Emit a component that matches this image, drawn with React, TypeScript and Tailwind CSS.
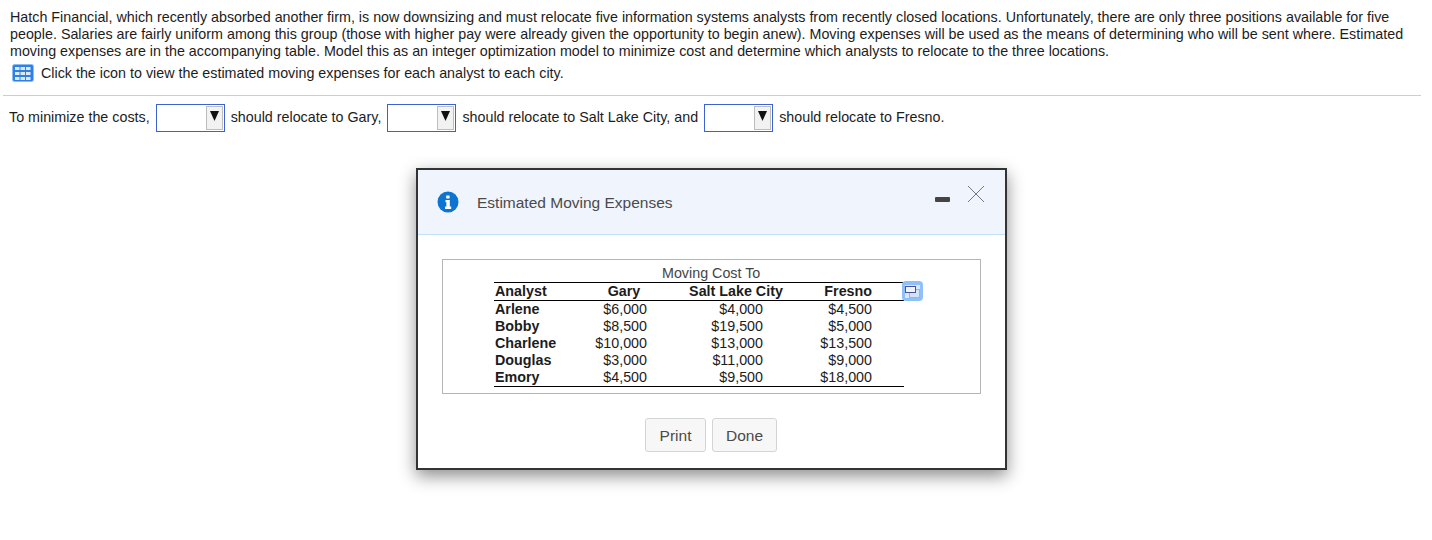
const ROWS = [
  ["Arlene", "$6,000", "$4,000", "$4,500"],
  ["Bobby", "$8,500", "$19,500", "$5,000"],
  ["Charlene", "$10,000", "$13,000", "$13,500"],
  ["Douglas", "$3,000", "$11,000", "$9,000"],
  ["Emory", "$4,500", "$9,500", "$18,000"],
];

function TableIcon() {
  return (
    <svg width="22" height="18" viewBox="0 0 22 18" className="shrink-0">
      <rect x="0.5" y="0.5" width="21" height="17" rx="2" fill="#2f80e4" stroke="#8dbcf0" />
      {[3, 8, 13].map((y) =>
        [3, 8.5, 14].map((x) => (
          <rect key={`${x}-${y}`} x={x} y={y} width="4.5" height="3" fill="#dbeafb" />
        ))
      )}
    </svg>
  );
}

function Dropdown() {
  return (
    <span className="mx-[6px] inline-flex h-[28px] w-[69px] items-start justify-end border border-[#3b62cf] bg-white pr-px pt-px align-middle">
      <span className="flex h-[24px] w-[17px] items-start justify-center border border-[#bdbdbd] bg-[#f2f2f2] pt-[4px]">
        <svg width="9" height="10" viewBox="0 0 9 10">
          <path d="M0 0H9L4.5 10Z" fill="#111" />
        </svg>
      </span>
    </span>
  );
}

export default function App() {
  return (
    <div className="relative h-[540px] w-[1432px] overflow-hidden bg-white font-['Liberation_Sans',Arial,sans-serif] text-[14.3px] text-[#1c1c1c]">
      <div className="px-[10px] pt-[9px] leading-[17px]">
        Hatch Financial, which recently absorbed another firm, is now downsizing and must relocate five information systems analysts from recently closed locations. Unfortunately, there are only three positions available for five
        <br />
        people. Salaries are fairly uniform among this group (those with higher pay were already given the opportunity to begin anew). Moving expenses will be used as the means of determining who will be sent where. Estimated
        <br />
        moving expenses are in the accompanying table. Model this as an integer optimization model to minimize cost and determine which analysts to relocate to the three locations.
      </div>
      <div className="mt-[4px] flex items-center gap-[7px] pl-[12px] leading-[18px]">
        <TableIcon />
        <span>Click the icon to view the estimated moving expenses for each analyst to each city.</span>
      </div>
      <div className="ml-[3px] mt-[13px] h-px w-[1418px] bg-[#c5cee6]" />
      <div className="mt-[8px] flex h-[28px] items-center whitespace-pre pl-[9px]">
        To minimize the costs,
        <Dropdown />
        should relocate to Gary,
        <Dropdown />
        should relocate to Salt Lake City, and
        <Dropdown />
        should relocate to Fresno.
      </div>

      {/* Estimated Moving Expenses dialog */}
      <div className="absolute left-[416px] top-[168px] h-[302px] w-[591px] border-2 border-[#333] bg-white shadow-[0_6px_16px_rgba(0,0,0,0.45)]">
        <div className="flex h-[65px] items-center border-b border-[#c4e2f7] bg-[#f0f5fd] pl-[19px] pr-[20px]">
          <svg width="22" height="22" viewBox="0 0 22 22" className="shrink-0">
            <circle cx="11" cy="11" r="10.5" fill="#0d74d2" />
            <path d="M9.2 4.5h3.4v3h-3.4zM8.5 9h4.3v6.5h1.4V18H8v-2.5h1.4V11.3H8.5z" fill="#fff" />
          </svg>
          <span className="ml-[18px] mt-px text-[15.5px] text-[#4a4a4a]">Estimated Moving Expenses</span>
          <span className="mb-[5px] ml-auto mr-[17px] h-[5px] w-[15px] rounded-[1px] bg-[#444]" />
          <svg width="18" height="18" viewBox="0 0 18 18" className="mb-[17px]">
            <path d="M1 1L17 17M17 1L1 17" stroke="#777" strokeWidth="1" fill="none" />
          </svg>
        </div>

        <div className="ml-[24px] mt-[24px] h-[135px] w-[539px] border border-[#b5b5b5] pl-[51px] pt-[5px]">
          <div className="relative w-[410px]">
            <div className="h-[17px] pl-[168px] leading-[17px] text-[#444]">Moving Cost To</div>
            <table className="w-[410px] table-fixed border-y border-black leading-[17px]">
              <colgroup>
                <col className="w-[100px]" />
                <col className="w-[66px]" />
                <col className="w-[130px]" />
                <col className="w-[114px]" />
              </colgroup>
              <thead>
                <tr className="border-b border-black font-bold">
                  <th className="pl-px text-left font-bold">Analyst</th>
                  <th className="pr-[6px] text-center font-bold">Gary</th>
                  <th className="pl-[22px] text-center font-bold whitespace-nowrap">Salt Lake City</th>
                  <th className="pr-[32px] text-right font-bold">Fresno</th>
                </tr>
              </thead>
              <tbody>
                {ROWS.map((r) => (
                  <tr key={r[0]}>
                    <td className="pl-px font-bold">{r[0]}</td>
                    <td className="pr-[13px] text-right">{r[1]}</td>
                    <td className="pr-[27px] text-right">{r[2]}</td>
                    <td className="pr-[32px] text-right">{r[3]}</td>
                  </tr>
                ))}
              </tbody>
            </table>
            {/* copy-table button */}
            <span className="absolute left-[408px] top-[16px] flex h-[20px] w-[21px] items-center justify-center rounded-[4px] bg-[#8fc0fb]">
              <svg width="15" height="13" viewBox="0 0 15 13">
                <rect width="15" height="13" fill="#d9e9fc" />
                <rect x="4.5" y="4.5" width="10" height="8" fill="#d5e2f5" stroke="#a3b2d4" />
                <rect x="0.5" y="1.5" width="10" height="6" fill="#eef3fb" stroke="#4b4fa0" />
              </svg>
            </span>
          </div>
        </div>

        <div className="ml-[227px] mt-[24px] flex gap-[6px] text-[15.5px] text-[#4a4a4a]">
          <button className="h-[34px] w-[61px] rounded-[3px] border border-[#d4d4d4] bg-[#f7f7f7] pt-px">Print</button>
          <button className="h-[34px] w-[65px] rounded-[3px] border border-[#d4d4d4] bg-[#f7f7f7] pt-px">Done</button>
        </div>
      </div>
    </div>
  );
}
